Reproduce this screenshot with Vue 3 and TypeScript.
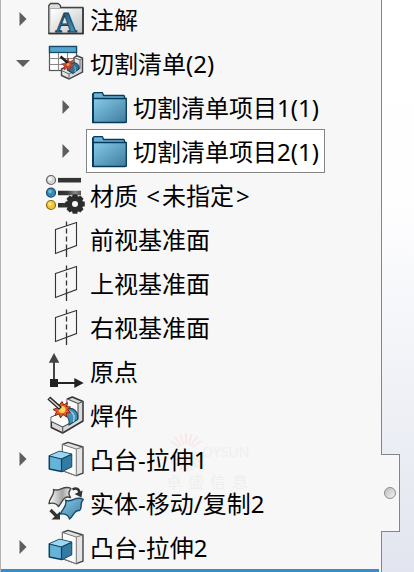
<script setup lang="ts">
import { computed, ref } from 'vue'

type IconName = 'notes' | 'cutlist' | 'folder' | 'material' | 'plane' | 'origin' | 'weld' | 'extrude' | 'move'

interface Feature {
  id: string
  label: string
  value?: string
  icon: IconName
  level: number
  expandable?: boolean
  parent?: string
}

const features: Feature[] = [
  { id: 'notes', label: '注解', icon: 'notes', level: 0, expandable: true },
  { id: 'cutlist', label: '切割清单(2)', icon: 'cutlist', level: 0, expandable: true },
  { id: 'cut1', label: '切割清单项目1(1)', icon: 'folder', level: 1, expandable: true, parent: 'cutlist' },
  { id: 'cut2', label: '切割清单项目2(1)', icon: 'folder', level: 1, expandable: true, parent: 'cutlist' },
  { id: 'material', label: '材质', value: '未指定', icon: 'material', level: 0 },
  { id: 'front', label: '前视基准面', icon: 'plane', level: 0 },
  { id: 'top', label: '上视基准面', icon: 'plane', level: 0 },
  { id: 'right', label: '右视基准面', icon: 'plane', level: 0 },
  { id: 'origin', label: '原点', icon: 'origin', level: 0 },
  { id: 'weld', label: '焊件', icon: 'weld', level: 0 },
  { id: 'boss1', label: '凸台-拉伸1', icon: 'extrude', level: 0, expandable: true },
  { id: 'move', label: '实体-移动/复制2', icon: 'move', level: 0 },
  { id: 'boss2', label: '凸台-拉伸2', icon: 'extrude', level: 0, expandable: true },
]

const selected = ref('cut2')
const open = ref<string[]>(['cutlist'])

const visible = computed(() => features.filter((f) => !f.parent || open.value.includes(f.parent)))

function toggle(id: string) {
  open.value = open.value.includes(id) ? open.value.filter((o) => o !== id) : [...open.value, id]
}

const teeth = [0, 45, 90, 135, 180, 225, 270, 315]
const rays = [0, 18, 36, 54, 126, 144, 162, 180, 198, 216, 234, 306, 324, 342]
</script>

<template>
  <svg class="defs" aria-hidden="true">
    <defs>
      <linearGradient id="blue" x1="0" y1="0" x2="1" y2="1">
        <stop offset="0" stop-color="#86cbea" />
        <stop offset="1" stop-color="#3f7c9d" />
      </linearGradient>
      <linearGradient id="deep" x1="0" y1="0" x2="0" y2="1">
        <stop offset="0" stop-color="#1b4964" />
        <stop offset="1" stop-color="#4da3cf" />
      </linearGradient>
      <linearGradient id="grey" x1="0" y1="0" x2="1" y2="1">
        <stop offset="0" stop-color="#ffffff" />
        <stop offset="1" stop-color="#c4c6c8" />
      </linearGradient>
      <linearGradient id="sheet" x1="0" y1="0" x2="1" y2="0">
        <stop offset="0" stop-color="#ffffff" />
        <stop offset="0.6" stop-color="#a4a4a4" />
        <stop offset="1" stop-color="#f0f0f0" />
      </linearGradient>
      <linearGradient id="bar" gradientUnits="userSpaceOnUse" x1="10" y1="0" x2="33" y2="0">
        <stop offset="0" stop-color="#2c2c2c" />
        <stop offset="0.4" stop-color="#3a3a3a" />
        <stop offset="0.75" stop-color="#8a8a8a" />
        <stop offset="1" stop-color="#555555" />
      </linearGradient>
    </defs>
  </svg>

  <main class="workspace">
    <section class="panel" aria-label="特征树">
      <ul class="tree">
        <li v-for="f in visible" :key="f.id" class="row" :class="{ child: f.level === 1 }">
          <span class="gutter">
            <button
              v-if="f.expandable"
              class="toggle"
              type="button"
              :aria-label="f.label"
              :aria-expanded="open.includes(f.id)"
              @click="toggle(f.id)"
            >
              <svg v-if="open.includes(f.id)" width="14" height="8" viewBox="0 0 14 8"><path d="M0 1H14L7 8Z" /></svg>
              <svg v-else width="8" height="14" viewBox="0 0 8 14"><path d="M.5 0 7.500 7 .5 14Z" /></svg>
            </button>
          </span>

          <button class="item" type="button" :class="{ selected: selected === f.id }" @click="selected = f.id">
            <svg class="icon" viewBox="0 0 36 36" aria-hidden="true">
              <g v-if="f.icon === 'notes'">
                <path d="M.8 32.500V4.500L2.500 2.500H10L12.500 4.500V6.500H35V32.500Z" fill="#ddd" stroke="#444" stroke-width="1.300" />
                <path d="M3 8H34V31.500H3Z" fill="url(#grey)" />
                <path d="M1.500 7.500H33" stroke="#aaa" stroke-width="1" />
                <path d="M.8 32.500H35V7" fill="none" stroke="#333" stroke-width="1.500" />
                <text class="letter" x="18" y="30.500" text-anchor="middle" fill="url(#deep)" stroke="#163f59" stroke-width="1">A</text>
              </g>

              <g v-else-if="f.icon === 'cutlist'">
                <rect x="1.500" y="1.500" width="27" height="24" fill="#fff" stroke="#555" stroke-width="1.200" />
                <path d="M1.500 13.500H28.500M1.500 19.500H28.500M10.500 7V25.500M19.500 7V25.500" stroke="#888" stroke-width="1.100" />
                <rect x="1.500" y="1.500" width="27" height="6" fill="#53a5cc" stroke="#174a66" stroke-width="1.300" />
                <path d="M26 12.500 29 10.800 34.500 13V27L21 34 13.500 30.500V24L26 18Z" fill="url(#grey)" stroke="#444" stroke-width="1.400" />
                <path d="M13.500 25.500 21 29 32 23.500V15L26 12.500M32 15 34.500 13M21 29V34" fill="none" stroke="#666" stroke-width="1" />
                <path d="M22 19C27 16 32 19 31 24L25 28.500 19 25Z" fill="#2e7298" stroke="#163e58" stroke-width="1" />
                <path d="M24 20C27 21 28 24 27 27" stroke="#8bc6e1" stroke-width="1" fill="none" />
                <path d="M20 13 21.500 17 25 15 23.500 19 26 21 22.500 22 22 25.500 19.500 22.500 16 25 16.500 21 13.500 19 17.500 18Z" fill="#cb4527" stroke="#8d2b1d" stroke-width=".6" />
                <path d="M12.500 11.500 20 18" stroke="#222" stroke-width="2.600" />
                <circle cx="20" cy="19.500" r="1.400" fill="#f0a070" />
              </g>

              <g v-else-if="f.icon === 'folder'" stroke="#07395a" stroke-width="1.300" stroke-linejoin="round">
                <path d="M1.700 33.500V5L3 3.700H11.500L12.500 6.500H33L34 9.500V33.500Z" fill="#69b3d6" />
                <path d="M2 9.500H35.300V33.300H2Z" fill="url(#blue)" />
                <path d="M2 5V33.500" stroke-width="1.800" />
              </g>

              <g v-else-if="f.icon === 'material'">
                <path d="M10 3.200H33" stroke="#343434" stroke-width="4.600" />
                <path d="M10 13.700H33V18.300H10ZM10 25.900H20V30.500H10Z" fill="url(#bar)" />
                <circle cx="3" cy="3" r="4.500" fill="#d5d5d5" stroke="#666" stroke-width="1.200" />
                <circle cx="3" cy="15.700" r="4.500" fill="#3a8ab5" stroke="#174e70" stroke-width="1.200" />
                <circle cx="3" cy="28" r="4.500" fill="#f0c538" stroke="#8f6b12" stroke-width="1.200" />
                <circle cx="2" cy="2" r="2" fill="#f5f5f5" />
                <circle cx="2" cy="14.500" r="1.800" fill="#73b9da" />
                <circle cx="2" cy="27" r="1.800" fill="#ffe68b" />
                <g fill="#2c2c2c">
                  <path v-for="t in teeth" :key="t" d="M24 20.500 24.700 17.200H29.300L30 20.500Z" :transform="`rotate(${t} 27 27)`" />
                </g>
                <circle cx="27" cy="27" r="5.500" fill="none" stroke="#2c2c2c" stroke-width="5" />
              </g>

              <g v-else-if="f.icon === 'plane'" fill="none" stroke="#333" stroke-width="1.100">
                <path d="M7.500 8.500 28.500 1.500V24.500L7.500 32.500Z" />
                <path d="M18.500 .5V5M18.500 28.500V36" stroke-width="1.300" />
                <path d="M18.500 7.500V28.500" stroke-width="1.300" stroke-dasharray="5 3" />
              </g>

              <g v-else-if="f.icon === 'origin'" fill="#222">
                <path d="M6 30V8" stroke="#444" stroke-width="2" />
                <path d="M6 30H28" stroke="#222" stroke-width="2" />
                <rect x="2" y="26" width="8" height="8" />
                <path d="M6 0 11.300 9.800H.8Z" fill="#444" />
                <path d="M35.700 30 26.300 35V25Z" />
              </g>

              <g v-else-if="f.icon === 'weld'" stroke-linejoin="round">
                <path d="M19.300 2 24.300 0 35 4.500V24L14.700 36 3.300 30.500V20.500L19.300 13Z" fill="#d9dadb" stroke="#333" stroke-width="1.500" />
                <path d="M19.300 2 30 6.500V22L14.700 30 3.300 24.500V20.500L19.300 13Z" fill="#fbfbfb" />
                <path d="M19.300 2 30 6.500 35 4.500M30 6.500V22L14.700 30 3.300 24.500M14.700 30V36" fill="none" stroke="#555" stroke-width="1.100" />
                <path d="M19 12C25 9.500 31 15 29.500 22.500L21 28C22 22 19 18 14 17Z" fill="#438fb5" stroke="#174a66" stroke-width="1.200" />
                <path d="M21 14C26 15.500 27 20 25.500 25" fill="none" stroke="#9bd2eb" stroke-width="1.200" />
                <path d="M14 4.500 15.700 8 19.500 5.500 18.500 9.500 22.500 10 19.500 12.500 22.500 15.500 18.500 16 18.500 20 15 17.500 12.500 21 11 17 7 18.500 8.500 14.500 5 12.500 9 11Z" fill="#e65b22" stroke="#8d2415" stroke-width="1" />
                <circle cx="14" cy="12.500" r="3.500" fill="#ffd45b" />
                <path d="M.8 1 12.500 11.500" stroke="#252525" stroke-width="4.200" />
                <path d="M1.500 1.700 11.500 10.700" stroke="#ddd" stroke-width="1.500" />
              </g>

              <g v-else-if="f.icon === 'extrude'" stroke-linejoin="round">
                <path d="M14.500 3.500 20 1.300 35 6V32.200L28.300 34.700 14.500 29.500Z" fill="#e4e4e4" stroke="#444" stroke-width="1.400" />
                <path d="M14.500 3.500 28.300 8V34.700L14.500 29.500Z" fill="#fbfbfb" stroke="#777" stroke-width="1" />
                <path d="M28.300 8 35 6" stroke="#777" stroke-width="1" />
                <path d="M1.300 15 11.500 10.500 23.500 13.200V25.500L13.500 30.500 1.300 28Z" fill="#65b3d9" stroke="#0d405f" stroke-width="1.500" />
                <path d="M1.300 15 13.500 18 23.500 13.200 11.500 10.500Z" fill="#9bd7f1" />
                <path d="M13.500 18 23.500 13.200V25.500L13.500 30.500Z" fill="#337ba1" />
                <path d="M1.300 15 13.500 18 23.500 13.200M13.500 18V30.500" fill="none" stroke="#0d405f" stroke-width="1.200" />
              </g>

              <g v-else stroke-linejoin="round">
                <path d="M5.500 4.500C11 7.500 16 -.5 23 3.500C20.500 7 20 9 22.500 12.500C16 10 15 16 10.500 21.500C8.500 18.500 5 17.500 1 18.500C1.500 12 7 10 5.500 4.500Z" fill="url(#sheet)" stroke="#444" stroke-width="1.400" />
                <path d="M17.500 15C23 18.500 28 10 35.300 14.500C31 18 35 23 31.500 25.500C26 24.500 26 31 21.500 34C20.500 30 17 28.500 12.500 29C14 24 20 21 17.500 15Z" fill="url(#blue)" stroke="#174a68" stroke-width="1.400" />
                <path d="M24.500 4.500C29 2 32 5 31 8.500" fill="none" stroke="#333" stroke-width="2.500" />
                <path d="M26.500 9 34.500 5.500 33.500 12.500Z" fill="#333" />
                <path d="M2.500 25 9 31.500" stroke="#333" stroke-width="3.200" />
                <path d="M12 34.500H3.500L12 26.500Z" fill="#333" />
              </g>
            </svg>
            <span v-if="f.value" class="label">{{ f.label + ' ' }}<span class="angle">&lt;</span>{{ f.value }}<span class="angle">&gt;</span></span>
            <span v-else class="label">{{ f.label }}</span>
          </button>
        </li>
      </ul>
      <div class="rollback"></div>

      <div class="watermark" aria-hidden="true">
        <svg class="sun" viewBox="0 0 40 40">
          <path v-for="r in rays" :key="r" d="M20 12V1" :transform="`rotate(${r} 20 20)`" stroke="#f8eaea" stroke-width="2" />
        </svg>
        <span class="brand">OYSUN</span>
        <span class="company">卓盛信息</span>
      </div>
    </section>

    <aside class="viewport">
      <button class="handle" type="button" aria-label="折叠面板"><span class="knob"></span></button>
    </aside>
  </main>
</template>

<style>
body {
  margin: 0;
}
</style>

<style scoped>
.defs {
  position: absolute;
  width: 0;
  height: 0;
}

.workspace {
  display: grid;
  grid-template-columns: minmax(0, 1fr) 32px;
  min-height: 100vh;
  font-family: 'Noto Sans', 'Noto Sans CJK SC', sans-serif;
  color: #000;
}

.panel {
  position: relative;
  overflow: hidden;
  background: #f7f7f7;
  border-left: 1px solid #b4b4b4;
  border-right: 1px solid #858585;
}

.tree {
  margin: -3px 0 0;
  padding: 0;
  list-style: none;
  position: relative;
  z-index: 1;
}

.row {
  display: flex;
  align-items: center;
  height: 44px;
  padding-left: 2px;
}

.row.child {
  padding-left: 45px;
}

.gutter {
  flex: none;
  display: flex;
  justify-content: center;
  width: 40px;
}

button {
  margin: 0;
  padding: 0;
  border: 0;
  background: none;
  font: inherit;
  color: inherit;
}

.toggle {
  display: flex;
  align-items: center;
  justify-content: center;
  width: 24px;
  height: 24px;
}

.toggle path {
  fill: #5e5e5e;
}

.item {
  display: flex;
  align-items: center;
  gap: 6px;
  height: 44px;
  box-sizing: border-box;
  padding: 0 5px 0 4px;
  border: 1px solid transparent;
}

.item.selected {
  background: #fff;
  border-color: #858585;
}

.icon {
  flex: none;
  width: 36px;
  height: 36px;
  overflow: visible;
}

.letter {
  font: bold 30px 'Liberation Serif', serif;
}

.label {
  padding-top: 2px;
  font-size: 24px;
  line-height: 32px;
  white-space: pre;
}

.angle {
  padding: 0 2px;
}

.rollback {
  height: 3px;
  margin-right: 2px;
  background: #3b8bc4;
}

.watermark {
  position: absolute;
  left: 165px;
  top: 432px;
  display: grid;
  grid-template-columns: 36px auto;
  row-gap: 2px;
  color: #efefef;
}

.sun {
  width: 40px;
  height: 40px;
}

.brand {
  align-self: center;
  font-size: 14px;
  line-height: 16px;
}

.company {
  grid-column: 1 / -1;
  font-size: 16px;
  line-height: 16px;
  letter-spacing: 6px;
}

.viewport {
  position: relative;
  background: linear-gradient(#fff 0%, #fefeff 35%, #e2e5ef 100%);
}

.handle {
  position: absolute;
  left: -1px;
  bottom: 40px;
  display: flex;
  align-items: center;
  justify-content: center;
  width: 19px;
  height: 78px;
  box-sizing: border-box;
  background: #f7f7f7;
  border: 1px solid #858585;
  border-left: 0;
}

.knob {
  width: 12px;
  height: 12px;
  box-sizing: border-box;
  border: 1px solid #8a8a8a;
  border-radius: 50%;
  background: linear-gradient(135deg, #bdbdbd, #f4f4f4);
}
</style>
